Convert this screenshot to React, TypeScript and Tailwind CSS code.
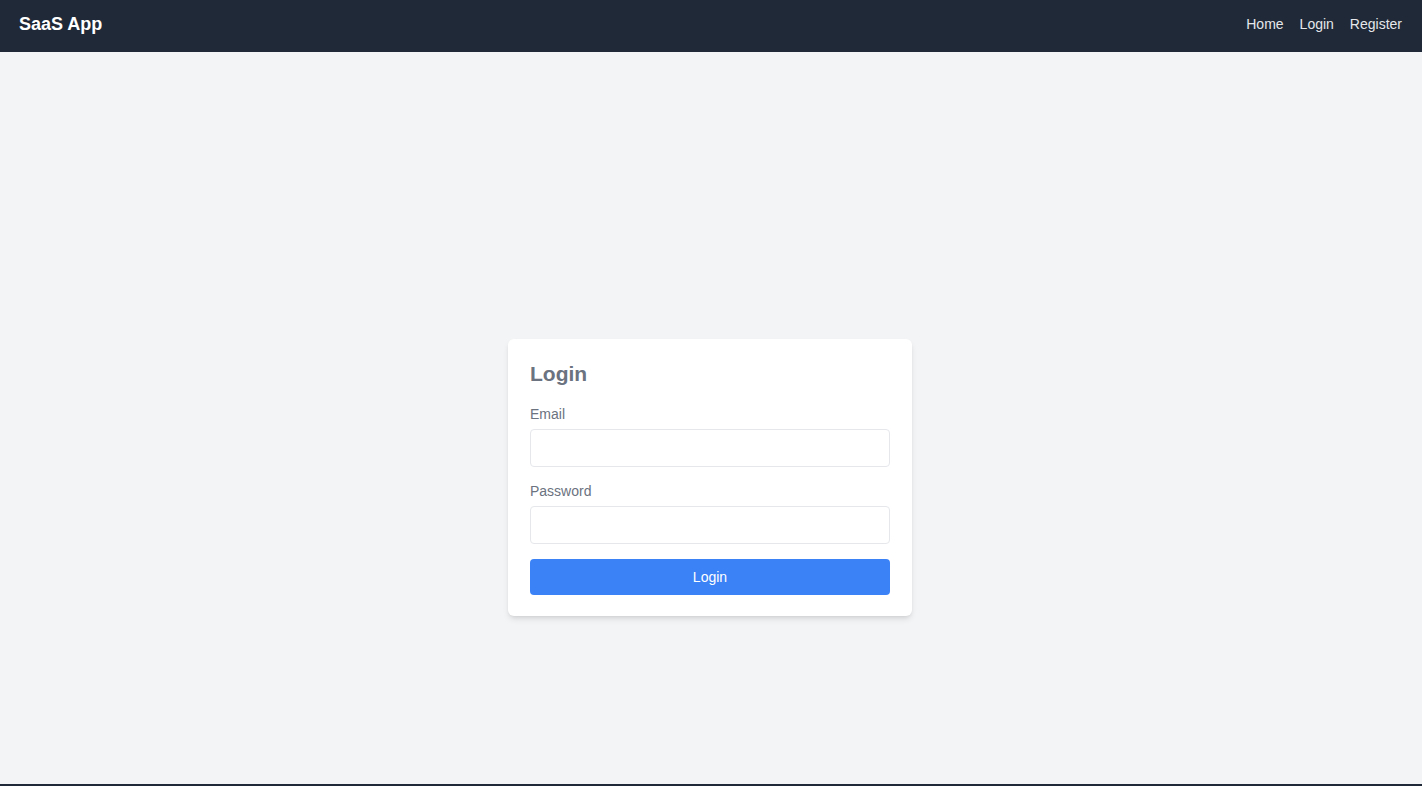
export default function App() {
  return (
    <div className="h-[786px] overflow-hidden bg-[#f3f4f6] font-['Liberation_Sans',Arial,sans-serif]">
      <nav className="flex h-[52px] items-center justify-between bg-[#1f2937] pr-5 pb-1 pl-[19px]">
        <span className="text-lg font-bold text-white">SaaS App</span>
        <div className="flex items-center gap-4 text-sm text-[#e5e7eb]">
          <a href="#">Home</a>
          <a href="#">Login</a>
          <a href="#">Register</a>
        </div>
      </nav>

      <main className="flex h-[732px] justify-center pt-[287px] pr-[2px]">
        <div className="h-fit w-[404px] rounded-md bg-white px-[22px] pt-[23px] pb-[21px] shadow-md">
          <h2 className="mb-[18px] text-[21px] leading-6 font-bold text-[#6b7280]">Login</h2>
          <form onSubmit={e => e.preventDefault()}>
            <label className="mb-[5px] block text-sm text-[#6b7280]">Email</label>
            <input type="email" className="block h-[38px] w-full rounded border border-[#e5e7eb] px-3 text-sm outline-none" />
            <label className="mt-[14px] mb-[5px] block text-sm text-[#6b7280]">Password</label>
            <input type="password" className="block h-[38px] w-full rounded border border-[#e5e7eb] px-3 text-sm outline-none" />
            <button type="submit" className="mt-[15px] h-9 w-full rounded bg-[#3b82f6] text-sm text-white">
              Login
            </button>
          </form>
        </div>
      </main>

      <footer className="h-10 bg-[#1f2937]" />
    </div>
  );
}
